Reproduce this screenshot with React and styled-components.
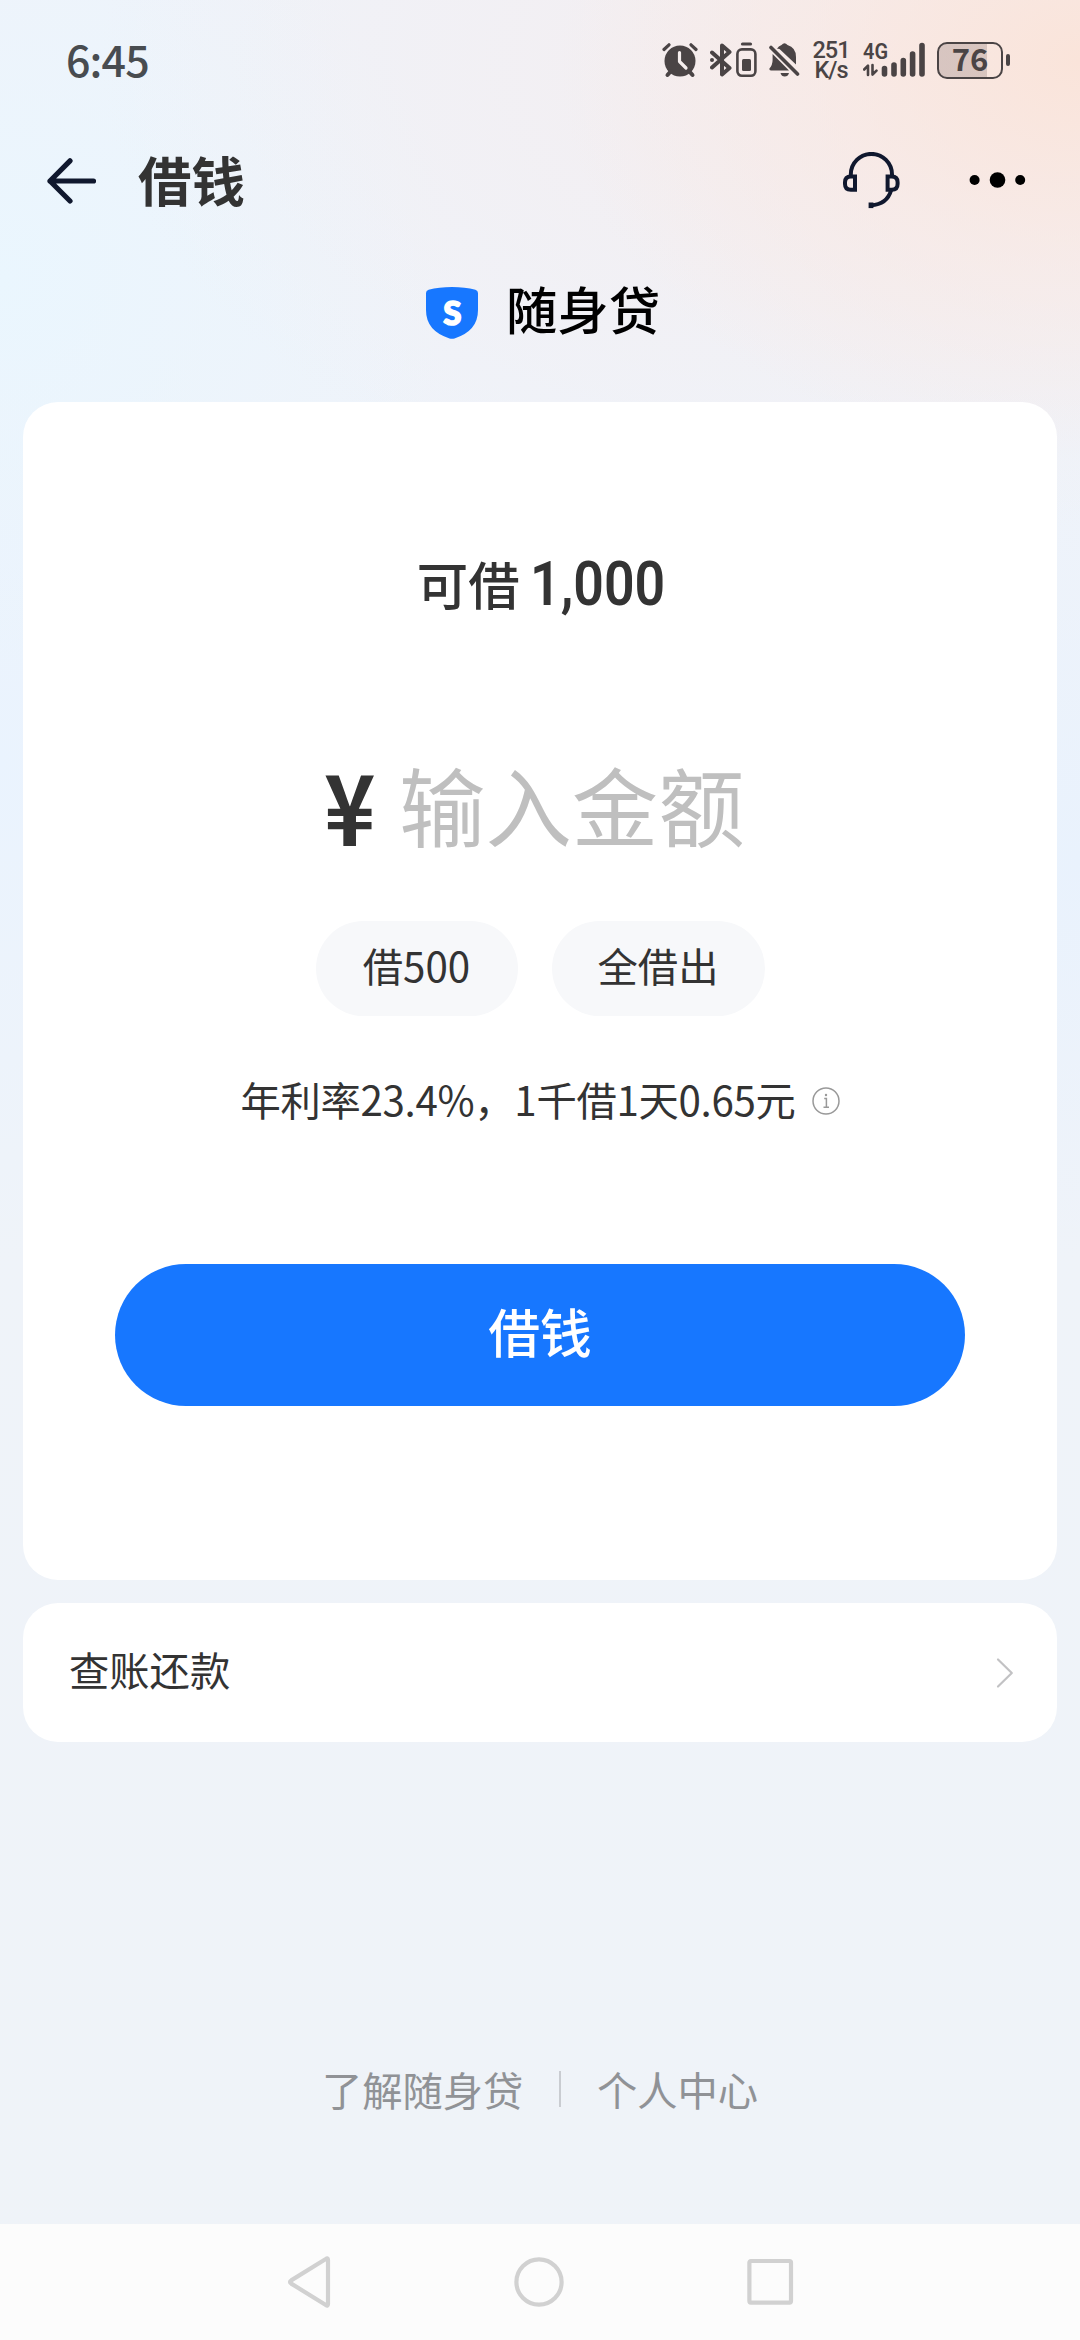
import React, { useState } from "react";
import styled, { createGlobalStyle } from "styled-components";

const INK = "#4a4445";
const NAVY = "#10182e";

const AlarmIcon = () => (
  <svg width="36" height="36" viewBox="0 0 36 36" fill="none">
    <circle cx="18" cy="19" r="15.5" fill={INK} />
    <path d="M9 29 L5.5 33 M27 29 L30.5 33" stroke={INK} strokeWidth="4" strokeLinecap="round" />
    <path d="M2 7.5 L7 2.8 M34 7.5 L29 2.8" stroke={INK} strokeWidth="3.2" strokeLinecap="round" />
    <path d="M17.5 10.5 V19.5 L24 26" stroke="#f6eeee" strokeWidth="3.2" strokeLinecap="round" strokeLinejoin="round" />
  </svg>
);

const BluetoothIcon = () => (
  <svg width="22" height="36" viewBox="0 0 22 36" fill="none">
    <path
      d="M2 10.5 L19.5 26 L12 32.5 V3.5 L19.5 10 L2 25.5"
      stroke={INK}
      strokeWidth="4"
      strokeLinecap="round"
      strokeLinejoin="round"
    />
    <circle cx="2" cy="18" r="2" fill={INK} />
  </svg>
);

const DeviceBatteryIcon = () => (
  <svg width="21" height="36" viewBox="0 0 21 36" fill="none">
    <path d="M6.5 2 H14.5" stroke={INK} strokeWidth="3.2" strokeLinecap="round" />
    <rect x="1.4" y="7.4" width="18" height="26.4" rx="4.5" stroke={INK} strokeWidth="2.6" />
    <rect x="6" y="17" width="9" height="12" rx="1.5" fill={INK} />
  </svg>
);

const BellOffIcon = () => (
  <svg width="31" height="36" viewBox="0 0 31 36" fill="none">
    <path d="M12.5 3 Q15.5 -.5 18.5 3 Q27 5.5 27 15 V22.5 L10.5 7 Q9.5 6.5 8 6.8 Q9.5 4.2 12.5 3 Z" fill={INK} />
    <path d="M3.6 12 L20 28.6 H2 Q0 28.6 .4 26.6 Q3.6 23 3.6 18 Z" fill={INK} />
    <path d="M11.5 31 H20 Q19 34.6 15.7 34.6 Q12.5 34.6 11.5 31 Z" fill={INK} />
    <path d="M2 5.5 L28.5 32" stroke={INK} strokeWidth="3.6" strokeLinecap="round" />
  </svg>
);

const SignalIcon = () => (
  <svg width="64" height="44" viewBox="0 -4 64 44" fill="none">
    <SvgLabel x="0" y="17" fontSize="22" textLength="25" lengthAdjust="spacingAndGlyphs">
      4G
    </SvgLabel>
    <path d="M1.2 27.5 L5 23.6 V33 M9.5 23 V32.6 L13.5 28.6" stroke={INK} strokeWidth="2.6" strokeLinecap="round" strokeLinejoin="round" />
    <path
      d="M21.5 26.5 V32 M31 23 V32 M40.3 18.5 V32 M49.6 12 V32 M59 3.5 V32"
      stroke={INK}
      strokeWidth="5.6"
      strokeLinecap="round"
    />
  </svg>
);

const BackIcon = () => (
  <svg width="50" height="46" viewBox="0 0 50 46" fill="none">
    <path d="M23 2.8 L3 23 L23 43 M3 23 H46.5" stroke={NAVY} strokeWidth="5.2" strokeLinecap="round" strokeLinejoin="round" />
  </svg>
);

const HeadsetIcon = () => (
  <svg width="57" height="57" viewBox="0 0 57 57" fill="none" stroke={NAVY} strokeWidth="4">
    <path d="M7.8 24 V22.5 A20.6 20.6 0 0 1 49 22.5 V24" />
    <path d="M12 24.4 H7.8 Q2 24.4 2 30.2 V32 Q2 37.8 7.8 37.8 H12 Z" />
    <path d="M44.6 24.4 H48.8 Q54.6 24.4 54.6 30.2 V32 Q54.6 37.8 48.8 37.8 H44.6 Z" />
    <path d="M48.2 38 Q44 52.6 28 53.2" />
    <path d="M25.6 53.3 H30.4" strokeWidth="5.6" />
  </svg>
);

const MoreIcon = () => (
  <svg width="57" height="18" viewBox="0 0 57 18">
    <circle cx="5.6" cy="8" r="5" />
    <circle cx="28.5" cy="8" r="7.8" />
    <circle cx="51.2" cy="8" r="5" />
  </svg>
);

const ShieldIcon = () => (
  <svg width="52" height="52" viewBox="0 0 52 52">
    <path
      d="M0 6 Q0 3.4 2.6 2.7 Q13 0 26 0 Q39 0 49.4 2.7 Q52 3.4 52 6 V23 Q52 44 28.5 51.4 Q26 52.2 23.5 51.4 Q0 44 0 23 Z"
      fill="#1777ff"
    />
    <ShieldLetter x="26.4" y="37.6">
      S
    </ShieldLetter>
  </svg>
);

const InfoIcon = () => (
  <svg width="28" height="34" viewBox="0 -4 28 34" fill="none" stroke="#999">
    <circle cx="14" cy="15" r="13" strokeWidth="1.5" />
    <path d="M12.2 12.5 H14.4 V21 M11.5 21.2 H17" strokeWidth="1.5" />
    <circle cx="14" cy="9" r="1.2" fill="#999" stroke="none" />
  </svg>
);

const ChevronIcon = () => (
  <svg width="18" height="32" viewBox="0 0 18 32" fill="none">
    <path d="M2 2.5 L15.8 16 L2 29.5" stroke="#c2c2c4" strokeWidth="2.2" strokeLinecap="round" strokeLinejoin="round" />
  </svg>
);

const NavIcon = ({ children }) => (
  <svg width="54" height="54" viewBox="0 0 54 54" fill="none" stroke="#d1d1d1" strokeWidth="4.2" strokeLinejoin="round">
    {children}
  </svg>
);

const StatusBar = () => (
  <StatusRow>
    <Clock>6:45</Clock>
    <StatusIcons>
      <AlarmIcon />
      <Gap $w={12} />
      <BluetoothIcon />
      <Gap $w={4} />
      <DeviceBatteryIcon />
      <Gap $w={12} />
      <BellOffIcon />
      <Gap $w={13} />
      <Speed>
        <span>251</span>
        <span>K/s</span>
      </Speed>
      <Gap $w={14} />
      <SignalIcon />
      <Gap $w={10} />
      <Battery>
        <BatteryLevel>76</BatteryLevel>
      </Battery>
      <BatteryTip />
    </StatusIcons>
  </StatusRow>
);

const App = () => {
  const [amount, setAmount] = useState("");

  return (
    <Page>
      <GlobalStyle />
      <StatusBar />
      <Header>
        <BackIcon />
        <Title>借钱</Title>
        <HeadsetIcon />
        <MoreIcon />
      </Header>
      <Brand>
        <ShieldIcon />
        <BrandName>随身贷</BrandName>
      </Brand>

      <LoanCard>
        <Quota>
          可借<QuotaValue>1,000</QuotaValue>
        </Quota>
        <AmountRow>
          <Yen>¥</Yen>
          <AmountInput
            placeholder="输入金额"
            value={amount}
            onChange={(e) => setAmount(e.target.value)}
          />
        </AmountRow>
        <Chips>
          <Chip $w={202} onClick={() => setAmount("500")}>借500</Chip>
          <Chip $w={213} onClick={() => setAmount("1000")}>全借出</Chip>
        </Chips>
        <Rate>
          <span>年利率23.4%，1千借1天0.65元</span>
          <InfoIcon />
        </Rate>
        <BorrowButton>借钱</BorrowButton>
      </LoanCard>

      <RepayCard>
        <RepayLabel>查账还款</RepayLabel>
        <ChevronIcon />
      </RepayCard>

      <Footer>
        <span>了解随身贷</span>
        <Divider />
        <span>个人中心</span>
      </Footer>

      <SystemNav>
        <NavIcon>
          <path d="M47 5 V49 Q47 51.5 44.8 50 L10.2 28.6 Q7.8 27 10.2 25.4 L44.8 4 Q47 2.5 47 5 Z" />
        </NavIcon>
        <NavIcon>
          <circle cx="27" cy="27" r="22.6" />
        </NavIcon>
        <NavIcon>
          <rect x="6.4" y="6" width="41.6" height="41.6" rx="1.5" />
        </NavIcon>
      </SystemNav>
    </Page>
  );
};

const GlobalStyle = createGlobalStyle`
  * {
    box-sizing: border-box;
  }

  body {
    margin: 0;
    font-family: "Noto Sans CJK SC", sans-serif;
    color: #333;
  }

  svg {
    display: block;
    flex-shrink: 0;
  }

  button {
    border: none;
    padding: 0;
    font-family: inherit;
    cursor: pointer;
  }
`;

const Page = styled.div`
  width: 1080px;
  height: 2340px;
  display: flex;
  flex-direction: column;
  align-items: center;
  background:
    radial-gradient(520px 400px at 1080px 60px, #fae4da 0%, rgba(250, 231, 224, 0.55) 50%, rgba(247, 236, 236, 0) 100%),
    radial-gradient(800px 480px at 900px 60px, rgba(247, 234, 233, 0.7) 0%, rgba(243, 238, 242, 0) 100%),
    radial-gradient(460px 420px at 0 280px, #eaf6fe 0%, rgba(236, 244, 254, 0) 100%),
    radial-gradient(300px 500px at 0 760px, #eaf3fe 0%, rgba(236, 243, 253, 0) 100%),
    radial-gradient(300px 400px at 1080px 860px, #e9f2fd 0%, rgba(236, 243, 253, 0) 100%),
    linear-gradient(#eff3fa, #eff3f8);
`;

const StatusRow = styled.div`
  width: 100%;
  height: 120px;
  padding: 0 70px 0 66px;
  display: flex;
  align-items: center;
  justify-content: space-between;
  color: ${INK};
`;

const Clock = styled.div`
  font-size: 43px;
  font-weight: 500;
  line-height: 116px;
  height: 120px;
  color: #484c50;
  letter-spacing: -0.9px;
`;

const StatusIcons = styled.div`
  display: flex;
  align-items: center;
`;

const Gap = styled.div`
  width: ${({ $w }) => $w}px;
`;

const Speed = styled.div`
  width: 36px;
  display: flex;
  flex-direction: column;
  align-items: center;
  font-family: Roboto, sans-serif;
  font-size: 23.5px;
  font-weight: 500;
  line-height: 20.5px;
  letter-spacing: -1px;
`;

const SvgLabel = styled.text`
  fill: ${INK};
  font-family: Roboto, sans-serif;
  font-weight: 600;
`;

const ShieldLetter = styled.text`
  fill: #fff;
  stroke: #fff;
  stroke-width: 1.6px;
  font-family: Lato, sans-serif;
  font-size: 33px;
  font-weight: 900;
  text-anchor: middle;
`;

const Battery = styled.div`
  width: 66px;
  height: 37px;
  border: 2.6px solid ${INK};
  border-radius: 10px;
  background: linear-gradient(90deg, rgba(110, 90, 90, 0.24) 78%, transparent 78%);
`;

const BatteryLevel = styled.div`
  text-align: center;
  font-size: 31px;
  font-weight: 700;
  line-height: 27px;
`;

const BatteryTip = styled.div`
  width: 4px;
  height: 12px;
  margin-left: 3px;
  border-radius: 2px;
  background: ${INK};
`;

const Header = styled.header`
  width: 100%;
  height: 121px;
  padding: 0 54px 0 47px;
  display: flex;
  align-items: center;
`;

const Title = styled.h1`
  margin: -4px auto 0 41px;
  font-size: 53.5px;
  font-weight: 700;
  line-height: 80px;
  color: #333;

  & + svg {
    margin-right: 69px;
  }
`;

const Brand = styled.div`
  height: 161px;
  padding: 0 0 18px 6px;
  display: flex;
  align-items: center;
  gap: 28px;
`;

const BrandName = styled.div`
  font-size: 51.4px;
  font-weight: 500;
  line-height: 80px;
  margin-top: -10px;
  color: #000;
`;

const LoanCard = styled.main`
  width: 1034px;
  height: 1178px;
  padding-top: 141px;
  display: flex;
  flex-direction: column;
  align-items: center;
  border-radius: 35px;
  background: #fff;
`;

const Quota = styled.div`
  height: 80px;
  display: flex;
  align-items: baseline;
  font-size: 51.4px;
  font-weight: 500;
  line-height: 80px;
`;

const QuotaValue = styled.span`
  margin: 0 -20px 0 10px;
  font-family: Roboto, sans-serif;
  font-size: 61px;
  font-weight: 600;
  transform: scaleX(0.88);
  transform-origin: left;
`;

const AmountRow = styled.div`
  width: 432px;
  height: 120px;
  margin-top: 120px;
  display: flex;
  align-items: center;
`;

const Yen = styled.span`
  width: 75px;
  font-size: 98px;
  font-weight: 700;
  line-height: 120px;
  transform: scaleX(0.89);
  transform-origin: left;
`;

const AmountInput = styled.input`
  width: 352px;
  height: 120px;
  padding: 0;
  border: none;
  outline: none;
  background: transparent;
  font-family: inherit;
  font-size: 86.4px;
  color: #333;

  &::placeholder {
    color: #bfbfbf;
    opacity: 1;
  }
`;

const Chips = styled.div`
  margin-top: 58px;
  display: flex;
  gap: 34px;
`;

const Chip = styled.button`
  width: ${({ $w }) => $w}px;
  height: 95px;
  padding-bottom: 9px;
  border-radius: 48px;
  background: #f7f8fa;
  font-size: 40.3px;
  color: #333;
`;

const Rate = styled.div`
  height: 60px;
  margin-top: 53px;
  display: flex;
  align-items: center;
  gap: 16px;
  font-size: 40.3px;
  line-height: 60px;
  letter-spacing: -0.3px;
`;

const BorrowButton = styled.button`
  width: 850px;
  height: 142px;
  margin-top: 135px;
  padding-bottom: 9px;
  border-radius: 71px;
  background: #1777ff;
  font-size: 51.8px;
  font-weight: 500;
  color: #fff;
`;

const RepayCard = styled.div`
  width: 1034px;
  height: 139px;
  margin-top: 23px;
  padding: 0 43px 0 46px;
  display: flex;
  align-items: center;
  justify-content: space-between;
  border-radius: 35px;
  background: #fff;
`;

const RepayLabel = styled.div`
  padding-bottom: 7px;
  font-size: 40.3px;
  line-height: 60px;
`;

const Footer = styled.footer`
  margin-top: auto;
  height: 60px;
  margin-bottom: 105px;
  display: flex;
  align-items: center;
  gap: 36px;
  font-size: 40.3px;
  line-height: 60px;
  color: #909296;
`;

const Divider = styled.div`
  width: 1.5px;
  height: 36px;
  background: #c9ccd1;
`;

const SystemNav = styled.nav`
  width: 100%;
  height: 116px;
  padding: 0 283px 0 281px;
  display: flex;
  align-items: center;
  justify-content: space-between;
  background: #fcfcfc;
`;

export default App;
